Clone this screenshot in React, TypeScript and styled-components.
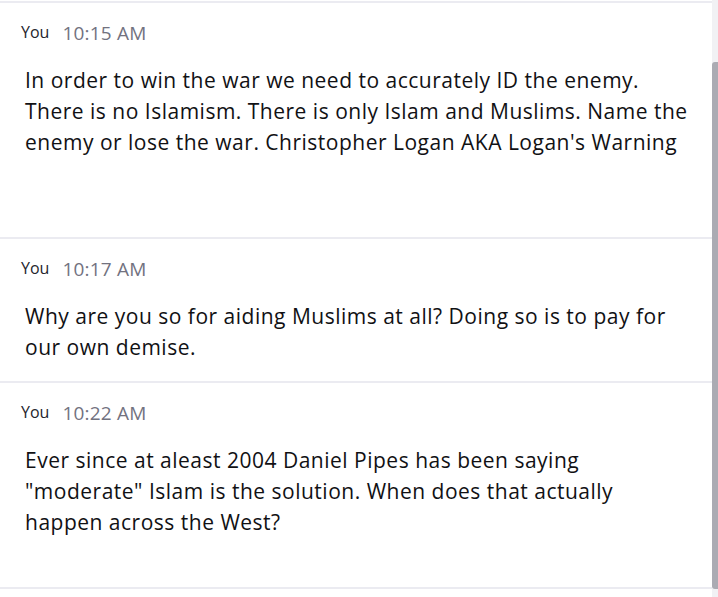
import React from "react";
import styled, { createGlobalStyle } from "styled-components";

const Global = createGlobalStyle`
  html, body { margin: 0; padding: 0; background: #ffffff; }
  body { font-family: "Open Sans", "Noto Sans", "Liberation Sans", sans-serif; }
  #root { width: 718px; height: 597px; overflow: hidden; }
`;

const Frame = styled.div`
  display: flex;
  width: 718px;
  height: 597px;
  background: #ffffff;
`;

const List = styled.div`
  flex: 1;
  display: flex;
  flex-direction: column;
  border-top: 2px solid #ebebf1;
  margin-top: 1px;
`;

const Message = styled.div<{ $minHeight: number }>`
  display: flex;
  flex-direction: column;
  min-height: ${(p) => p.$minHeight}px;
  box-sizing: border-box;
  padding: 19px 22px 0 21px;
  border-bottom: 2px solid #ebebf1;
`;

const Header = styled.div`
  display: flex;
  align-items: flex-start;
  gap: 13px;
  height: 30px;
`;

const Author = styled.span`
  font-size: 16px;
  line-height: 20px;
  color: #24242c;
`;

const Time = styled.span`
  font-size: 19px;
  line-height: 22px;
  letter-spacing: 0.2px;
  color: #72727f;
`;

const Body = styled.p`
  margin: 13px 0 0 4px;
  font-size: 21px;
  line-height: 30.8px;
  letter-spacing: 0.5px;
  color: #111114;
`;

const Track = styled.div`
  width: 6px;
  background: #f1f1f4;
  display: flex;
  flex-direction: column;
`;

const Thumb = styled.div`
  margin-top: 62px;
  flex: 1;
  margin-bottom: 8px;
  background: #ababb3;
  border-radius: 3px 0 0 3px;
`;

type Msg = { time: string; text: string; minHeight: number };

const messages: Msg[] = [
  {
    time: "10:15 AM",
    text:
      "In order to win the war we need to accurately ID the enemy. There is no Islamism. There is only Islam and Muslims. Name the enemy or lose the war. Christopher Logan AKA Logan's Warning",
    minHeight: 236,
  },
  {
    time: "10:17 AM",
    text: "Why are you so for aiding Muslims at all? Doing so is to pay for our own demise.",
    minHeight: 144,
  },
  {
    time: "10:22 AM",
    text:
      "Ever since at aleast 2004 Daniel Pipes has been saying \"moderate\" Islam is the solution. When does that actually happen across the West?",
    minHeight: 206,
  },
];

export default function App() {
  return (
    <Frame>
      <Global />
      <List>
        {messages.map((m) => (
          <Message key={m.time} $minHeight={m.minHeight}>
            <Header>
              <Author>You</Author>
              <Time>{m.time}</Time>
            </Header>
            <Body>{m.text}</Body>
          </Message>
        ))}
      </List>
      <Track>
        <Thumb />
      </Track>
    </Frame>
  );
}
